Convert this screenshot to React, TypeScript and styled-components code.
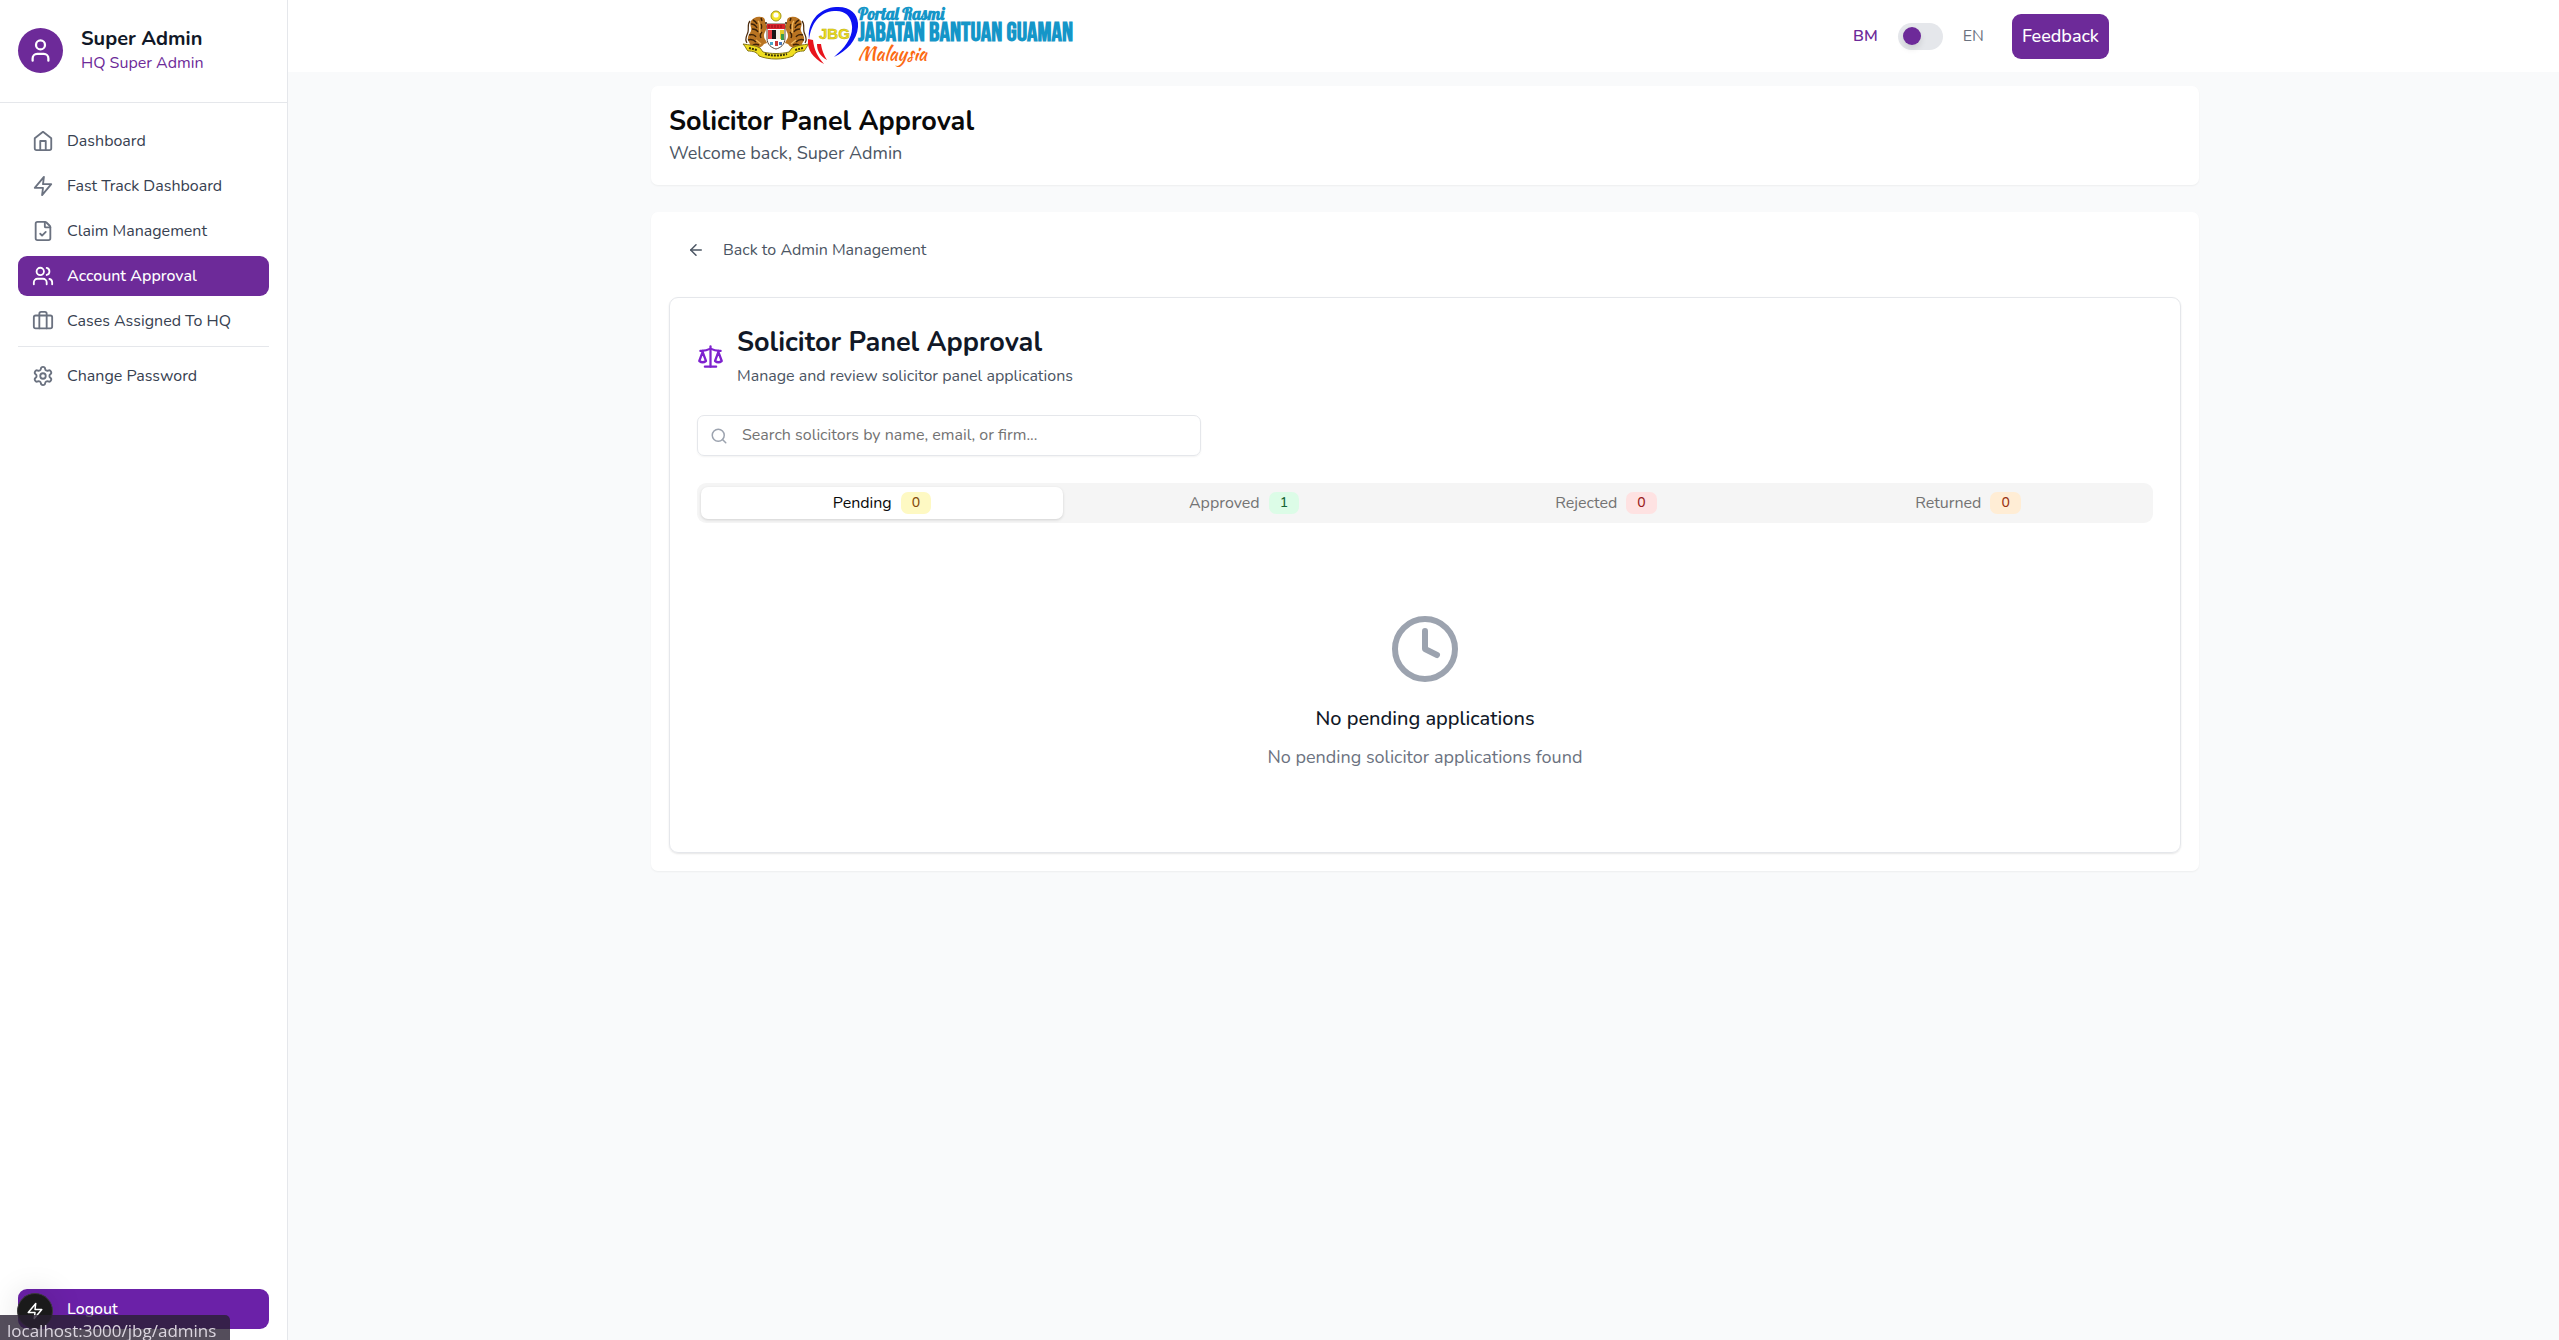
import React, { useState } from "react";
import styled, { createGlobalStyle } from "styled-components";
import {
  ArrowLeft,
  Briefcase,
  Clock,
  FileCheck,
  LogOut,
  Scale,
  Search,
  Settings,
  User,
  Users,
} from "lucide-react";

const c = {
  brand: "#6d2a99",
  ink: "#111827",
  text: "#374151",
  soft: "#4b5563",
  muted: "#6b7280",
  faint: "#9ca3af",
  line: "#e5e7eb",
  page: "#f9fafb",
};

const GlobalStyle = createGlobalStyle`
  *, *::before, *::after { box-sizing: border-box; }
  body {
    margin: 0;
    background: ${c.page};
    color: #0a0a0a;
    font-family: Nunito, Lato, sans-serif;
    font-size: 18px;
    line-height: 27px;
  }
  h1, h2, h3, p { margin: 0; font-weight: inherit; }
  button, input { font: inherit; }
  button { border: 0; cursor: pointer; }
  a { color: inherit; text-decoration: none; }
`;

const Shell = styled.div`
  display: flex;
  min-height: 100vh;
`;

/* Sidebar */

const Sidebar = styled.aside`
  position: sticky;
  top: 0;
  display: flex;
  flex-direction: column;
  flex: none;
  width: 288px;
  height: 100vh;
  background: #fff;
  border-right: 1px solid ${c.line};
`;

const Profile = styled.div`
  display: flex;
  align-items: center;
  gap: 18px;
  padding: 25px 18px 27px;
  border-bottom: 1px solid ${c.line};
`;

const Avatar = styled.div`
  display: grid;
  place-items: center;
  width: 45px;
  height: 45px;
  border-radius: 50%;
  background: ${c.brand};
  color: #fff;
`;

const ProfileName = styled.p`
  font-size: 20px;
  font-weight: 700;
  color: ${c.ink};
`;

const ProfileRole = styled.p`
  font-size: 16px;
  line-height: 23px;
  color: ${c.brand};
`;

const Nav = styled.nav`
  display: flex;
  flex-direction: column;
  flex: 1;
  gap: 5px;
  padding: 18px;
`;

const NavLink = styled.a<{ $active?: boolean }>`
  display: flex;
  align-items: center;
  gap: 13px;
  height: 40px;
  padding: 0 14px;
  border-radius: 9px;
  font-size: 16px;
  font-weight: ${(p) => (p.$active ? 500 : 400)};
  color: ${(p) => (p.$active ? "#fff" : c.text)};
  background: ${(p) => (p.$active ? c.brand : "transparent")};

  svg {
    color: ${(p) => (p.$active ? "#fff" : c.muted)};
  }
`;

const NavDivider = styled.hr`
  width: 100%;
  margin: 0 0 4px;
  border: 0;
  border-top: 1px solid ${c.line};
`;

const SidebarFooter = styled.div`
  padding: 11px 18px;
`;

const LogoutButton = styled.button`
  display: flex;
  align-items: center;
  gap: 13px;
  width: 100%;
  height: 40px;
  padding: 0 14px;
  border-radius: 9px;
  background: #6b21a8;
  color: #fff;
  font-size: 16px;
  font-weight: 500;
`;

/* Header */

const Main = styled.div`
  flex: 1;
  min-width: 0;
`;

const TopBar = styled.header`
  padding-left: 3px;
  background: #fff;
`;

const TopBarInner = styled.div`
  display: flex;
  align-items: center;
  justify-content: space-between;
  max-width: 1440px;
  height: 72px;
  margin: 0 auto;
  padding: 0 36px;
`;

const Brand = styled.a`
  display: flex;
  align-items: center;
`;

const BrandText = styled.span`
  display: flex;
  flex-direction: column;
  padding-bottom: 6px;
  white-space: nowrap;
`;

const BrandTop = styled.span`
  font-family: "Lobster", "Liberation Serif", serif;
  font-size: 17px;
  font-weight: 700;
  line-height: 18px;
  color: #1596c8;
`;

const BrandName = styled.span`
  font-family: "Bebas Neue", "Oswald", "Roboto Condensed", "Liberation Sans Narrow", "Roboto", sans-serif;
  font-size: 26px;
  font-weight: 700;
  line-height: 22px;
  color: #1596c8;
`;

const BrandCountry = styled.span`
  font-family: "Kaushan Script", "Lobster", "Liberation Serif", serif;
  font-size: 19px;
  line-height: 16px;
  color: #fb6a13;
`;

const Actions = styled.div`
  display: flex;
  align-items: center;
  gap: 28px;
`;

const Language = styled.label`
  display: flex;
  align-items: center;
  gap: 20px;
  font-size: 16px;
`;

const Lang = styled.span<{ $on: boolean }>`
  font-weight: ${(p) => (p.$on ? 600 : 400)};
  color: ${(p) => (p.$on ? c.brand : c.muted)};
`;

const Toggle = styled.input`
  appearance: none;
  display: flex;
  align-items: center;
  width: 45px;
  height: 27px;
  margin: 0;
  padding: 0 5px;
  border-radius: 14px;
  background: ${c.line};
  cursor: pointer;

  &::before {
    content: "";
    width: 18px;
    height: 18px;
    border-radius: 50%;
    background: ${c.brand};
    box-shadow: 0 4px 6px rgba(0, 0, 0, 0.1);
  }

  &:checked {
    justify-content: flex-end;
  }
`;

const FeedbackButton = styled.button`
  height: 45px;
  padding: 0 10px;
  border-radius: 9px;
  background: ${c.brand};
  color: #fff;
  font-weight: 500;
`;

/* Content */

const Content = styled.main`
  padding: 14px 18px 27px 21px;
`;

const Stack = styled.div`
  display: flex;
  flex-direction: column;
  gap: 27px;
  max-width: 1548px;
  margin: 0 auto;
`;

const Panel = styled.section`
  padding: 18px;
  border-radius: 7px;
  background: #fff;
  box-shadow: 0 1px 2px rgba(0, 0, 0, 0.05);
`;

const Title = styled.h1<{ $color?: string }>`
  font-size: 27px;
  font-weight: 700;
  line-height: 36px;
  color: ${(p) => p.$color || "#0a0a0a"};
`;

const Welcome = styled.p`
  color: ${c.soft};
`;

const BackLink = styled.a`
  display: inline-flex;
  align-items: center;
  gap: 18px;
  height: 40px;
  padding: 0 18px;
  font-size: 16px;
  color: ${c.soft};
`;

const Card = styled.section`
  display: flex;
  flex-direction: column;
  gap: 27px;
  margin-top: 27px;
  padding: 27px;
  border: 1px solid ${c.line};
  border-radius: 9px;
  box-shadow: 0 1px 2px rgba(0, 0, 0, 0.1);
`;

const CardHead = styled.div`
  display: flex;
  align-items: center;
  gap: 13px;

  svg {
    color: #7e22ce;
  }
`;

const CardNote = styled.p`
  margin-top: 4px;
  font-size: 16px;
  line-height: 23px;
  color: ${c.soft};
`;

const SearchBox = styled.label`
  display: flex;
  align-items: center;
  gap: 14px;
  max-width: 504px;
  height: 41px;
  padding: 0 12px;
  border: 1px solid ${c.line};
  border-radius: 7px;
  box-shadow: 0 1px 2px rgba(0, 0, 0, 0.05);
  color: ${c.faint};
`;

const SearchInput = styled.input`
  flex: 1;
  min-width: 0;
  padding: 0;
  border: 0;
  outline: 0;
  background: transparent;
  font-size: 16px;
  color: ${c.ink};

  &::placeholder {
    color: #737373;
    opacity: 1;
  }
`;

const TabList = styled.div`
  display: grid;
  grid-template-columns: repeat(4, 1fr);
  height: 40px;
  padding: 4px;
  border-radius: 9px;
  background: #f5f5f5;
`;

const Tab = styled.button<{ $active: boolean }>`
  display: flex;
  align-items: center;
  justify-content: center;
  gap: 9px;
  padding: 0;
  border-radius: 7px;
  font-size: 16px;
  color: ${(p) => (p.$active ? "#0a0a0a" : "#737373")};
  background: ${(p) => (p.$active ? "#fff" : "transparent")};
  box-shadow: ${(p) => (p.$active ? "0 1px 3px rgba(0, 0, 0, 0.15)" : "none")};
`;

const Count = styled.span<{ $bg: string; $fg: string }>`
  padding: 0 11px;
  border-radius: 7px;
  font-size: 14px;
  font-weight: 500;
  line-height: 22px;
  color: ${(p) => p.$fg};
  background: ${(p) => p.$bg};
`;

const Empty = styled.div`
  display: flex;
  flex-direction: column;
  align-items: center;
  padding: 90px 0 54px;
  text-align: center;

  svg {
    color: ${c.faint};
  }
`;

const EmptyTitle = styled.h3`
  margin: 18px 0 10px;
  font-size: 20px;
  font-weight: 500;
  line-height: 31px;
  color: ${c.ink};
`;

const EmptyNote = styled.p`
  color: ${c.muted};
`;

/* Overlays */

const DevBadge = styled.div`
  position: fixed;
  left: 17px;
  bottom: 11px;
  display: grid;
  place-items: center;
  width: 36px;
  height: 36px;
  border: 1px solid #3a3a3a;
  border-radius: 50%;
  background: #1a1a1a;
  color: #fff;
  box-shadow: 0 0 32px rgba(0, 0, 0, 0.15);
`;

const StatusBar = styled.div`
  position: fixed;
  left: 0;
  bottom: 0;
  height: 25px;
  padding: 0 14px 0 7px;
  overflow: hidden;
  border-top-right-radius: 5px;
  background: rgba(41, 33, 50, 0.8);
  color: #dcd6e0;
  font-family: "Open Sans", "Noto Sans", sans-serif;
  font-size: 17px;
  line-height: 32px;
`;

const HomeIcon = () => (
  <svg width="22" height="22" viewBox="0 0 24 24" fill="none" stroke="currentColor" strokeWidth="2" strokeLinecap="round" strokeLinejoin="round">
    <path d="m3 9 9-7 9 7v11a2 2 0 0 1-2 2H5a2 2 0 0 1-2-2z" />
    <path d="M9 22V12h6v10" />
  </svg>
);

const BoltIcon = ({ size = 22 }: { size?: number }) => (
  <svg width={size} height={size} viewBox="0 0 24 24" fill="none" stroke="currentColor" strokeWidth="2" strokeLinecap="round" strokeLinejoin="round">
    <path d="M13 2 3 14h9l-1 8 10-12h-9z" />
  </svg>
);

const Tiger = () => (
  <g>
    <path d="M20 13c-4-1-8 1-10 4-2 4 1 6 0 10-1 3-4 5-3 9 1 3 3 4 2 7l-2 2h8c3-1 6-2 8-5l3-1c-1-3-3-4-3-7 0-4 3-6 3-10-1-2-2-3-2-5 0-3-2-4-4-4z" fill="#b97422" />
    <path d="M12 16c2 1 3 2 4 4M10 20c3 0 5 2 6 4M11 25c2 0 5 1 6 3M8 31c3-1 6 0 7 2M7 36c3-1 6 0 8 2M11 42c2-2 5-2 7-1M20 20c1 2 1 3 0 5M21 28c-2 2-2 4-1 6M20 14l1 3M24 19h2" stroke="#3d2208" strokeWidth="1.4" fill="none" />
    <path d="M9 17c-3 3-1 7-2 11s-4 7-1 11" stroke="#4b2a0c" strokeWidth="1.2" fill="none" />
    <path d="M17 17c3 3 1 8 2 12M15 36l5 4" stroke="#f0b75c" strokeWidth="1.4" fill="none" />
  </g>
);

const Crest = () => (
  <svg width="117" height="64" viewBox="0 0 117 64" aria-hidden="true">
    <circle cx="35" cy="12" r="5" fill="#f5e52a" stroke="#a39413" strokeWidth="1" />
    <circle cx="35" cy="11" r="2.6" fill="#fff" />
    <Tiger />
    <g transform="translate(70 0) scale(-1 1)">
      <Tiger />
    </g>
    <path d="M26 20h18v14c0 7-5 10-9 11-4-1-9-4-9-11z" fill="#fff" stroke="#5a4636" strokeWidth="1" />
    <path d="M26 20h18v5H26z" fill="#d8232a" />
    <path d="M28 21v3M31 21v3M34 21v3M37 21v3M40 21v3" stroke="#8d1116" strokeWidth="1" />
    <path d="M27 26h4v9h-4z" fill="#e23b3f" />
    <path d="M31 26h4v9h-4z" fill="#161616" />
    <path d="M35 26h4v9h-4z" fill="#f2efe4" />
    <path d="M39 26h4v9h-4z" fill="#e4cf2b" />
    <path d="M40 30h3v6h-3z" fill="#3c9c4a" />
    <path d="M29 38h3v3h-3z" fill="#48a6c9" />
    <path d="M34 37h3v5h-3z" fill="#c83a3a" />
    <path d="M38 38h3v3h-3z" fill="#4878b9" />
    <path d="M2 40c6 1 12 1 17 4l3 4c8 2 18 2 26 0l3-4c5-3 11-3 17-4-3 3-3 5-5 7-5 0-9 1-11 5-10 4-24 4-34 0-2-4-6-5-11-5-2-2-2-4-5-7z" fill="#f0de1f" stroke="#857513" strokeWidth="1" />
    <path d="M24 50c7 2 15 2 22 0M8 44l8 2M62 44l-8 2" stroke="#3b3408" strokeWidth="2" strokeDasharray="2 1" fill="none" />
    <path d="M68 36C66 18 78 4 95 3c16-1 23 9 22 20-1 13-11 24-24 30 11-9 19-20 18-31C110 11 103 6 93 7 79 8 70 19 68 36z" fill="#0c12f2" />
    <path d="M67 35c-1 11 5 19 16 25-6-7-10-14-11-24zM76 40c0 7 3 12 10 16-3-5-5-9-6-16z" fill="#e8141c" />
    <text x="78" y="35" fontFamily="Liberation Sans, sans-serif" fontSize="15" fontWeight="700" fill="#f0e01c" stroke="#b7a90e" strokeWidth="0.5">
      JBG
    </text>
  </svg>
);

const navItems = [
  { label: "Dashboard", icon: <HomeIcon /> },
  { label: "Fast Track Dashboard", icon: <BoltIcon /> },
  { label: "Claim Management", icon: <FileCheck size={22} /> },
  { label: "Account Approval", icon: <Users size={22} />, active: true },
  { label: "Cases Assigned To HQ", icon: <Briefcase size={22} /> },
];

const tabs = [
  { label: "Pending", count: 0, bg: "#fef9c3", fg: "#854d0e" },
  { label: "Approved", count: 1, bg: "#dcfce7", fg: "#166534" },
  { label: "Rejected", count: 0, bg: "#fee2e2", fg: "#991b1b" },
  { label: "Returned", count: 0, bg: "#ffedd5", fg: "#9a3412" },
];

export default function App() {
  const [english, setEnglish] = useState(false);
  const [tab, setTab] = useState("Pending");
  const [query, setQuery] = useState("");

  return (
    <>
      <GlobalStyle />
      <Shell>
        <Sidebar>
          <Profile>
            <Avatar>
              <User size={27} />
            </Avatar>
            <div>
              <ProfileName>Super Admin</ProfileName>
              <ProfileRole>HQ Super Admin</ProfileRole>
            </div>
          </Profile>
          <Nav>
            {navItems.map((item) => (
              <NavLink key={item.label} href="#" $active={item.active}>
                {item.icon}
                {item.label}
              </NavLink>
            ))}
            <NavDivider />
            <NavLink href="#">
              <Settings size={22} />
              Change Password
            </NavLink>
          </Nav>
          <SidebarFooter>
            <LogoutButton type="button">
              <LogOut size={22} />
              Logout
            </LogoutButton>
          </SidebarFooter>
        </Sidebar>

        <Main>
          <TopBar>
            <TopBarInner>
              <Brand href="#">
                <Crest />
                <BrandText>
                  <BrandTop>Portal Rasmi</BrandTop>
                  <BrandName>JABATAN BANTUAN GUAMAN</BrandName>
                  <BrandCountry>Malaysia</BrandCountry>
                </BrandText>
              </Brand>
              <Actions>
                <Language>
                  <Lang $on={!english}>BM</Lang>
                  <Toggle
                    type="checkbox"
                    role="switch"
                    checked={english}
                    onChange={(e) => setEnglish(e.target.checked)}
                  />
                  <Lang $on={english}>EN</Lang>
                </Language>
                <FeedbackButton type="button">Feedback</FeedbackButton>
              </Actions>
            </TopBarInner>
          </TopBar>

          <Content>
            <Stack>
              <Panel>
                <Title>Solicitor Panel Approval</Title>
                <Welcome>Welcome back, Super Admin</Welcome>
              </Panel>

              <Panel>
                <BackLink href="#">
                  <ArrowLeft size={18} />
                  Back to Admin Management
                </BackLink>
                <Card>
                  <CardHead>
                    <Scale size={27} />
                    <div>
                      <Title as="h2" $color={c.ink}>
                        Solicitor Panel Approval
                      </Title>
                      <CardNote>Manage and review solicitor panel applications</CardNote>
                    </div>
                  </CardHead>
                  <SearchBox>
                    <Search size={18} />
                    <SearchInput
                      type="text"
                      aria-label="Search solicitors"
                      placeholder="Search solicitors by name, email, or firm..."
                      value={query}
                      onChange={(e) => setQuery(e.target.value)}
                    />
                  </SearchBox>
                  <div>
                    <TabList role="tablist">
                      {tabs.map((t) => (
                        <Tab
                          key={t.label}
                          type="button"
                          role="tab"
                          aria-selected={tab === t.label}
                          $active={tab === t.label}
                          onClick={() => setTab(t.label)}
                        >
                          {t.label}
                          <Count $bg={t.bg} $fg={t.fg}>
                            {t.count}
                          </Count>
                        </Tab>
                      ))}
                    </TabList>
                    <Empty role="tabpanel">
                      <Clock size={72} />
                      <EmptyTitle>No {tab.toLowerCase()} applications</EmptyTitle>
                      <EmptyNote>No {tab.toLowerCase()} solicitor applications found</EmptyNote>
                    </Empty>
                  </div>
                </Card>
              </Panel>
            </Stack>
          </Content>
        </Main>
      </Shell>

      <DevBadge>
        <BoltIcon size={18} />
      </DevBadge>
      <StatusBar>localhost:3000/jbg/admins</StatusBar>
    </>
  );
}
